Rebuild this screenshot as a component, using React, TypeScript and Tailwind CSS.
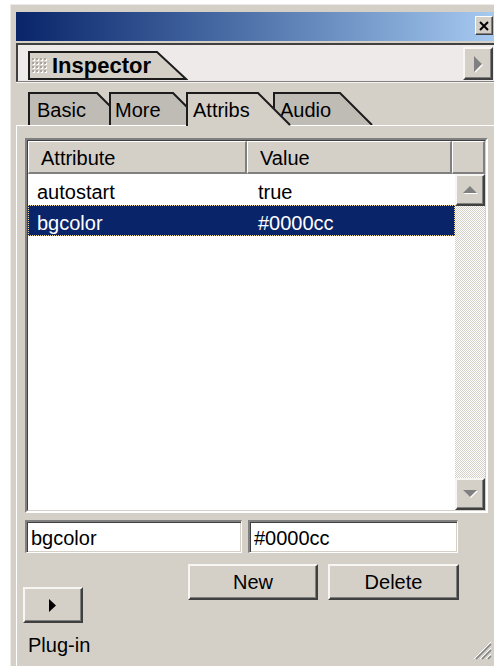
import React from 'react';

type Attr = { name: string; value: string };

const attrs: Attr[] = [
  { name: 'autostart', value: 'true' },
  { name: 'bgcolor', value: '#0000cc' },
];

const raised =
  'border-t-2 border-l-2 border-b-2 border-r-2 border-t-[#f7f6f3] border-l-[#f7f6f3] border-b-[#404040] border-r-[#404040] bg-[#d4d0c8] shadow-[inset_-1px_-1px_0_#808080]';

const sunken =
  'border-t-2 border-l-2 border-b border-r border-t-[#808080] border-l-[#808080] border-b-white border-r-white bg-white shadow-[inset_1px_1px_0_#404040,inset_-1px_-1px_0_#d4d0c8]';

const headerCell =
  'h-full border-t border-l border-b-2 border-r-2 border-t-white border-l-white border-b-[#808080] border-r-[#808080] bg-[#d4d0c8] pl-[12px] pt-[5px] leading-[23px]';

function Grip() {
  const dots = [];
  for (let r = 0; r < 4; r++) {
    for (let c = 0; c < 4; c++) {
      dots.push(
        <g key={`${r}-${c}`}>
          <rect x={c * 4 + 1} y={r * 4 + 1} width="2" height="2" fill="#ffffff" />
          <rect x={c * 4} y={r * 4} width="2" height="2" fill="#a9a59d" />
        </g>
      );
    }
  }
  return (
    <svg width="16" height="16" viewBox="0 0 16 16" className="mt-[5px] shrink-0">
      {dots}
    </svg>
  );
}

function InspectorTab() {
  return (
    <div className="relative h-[29px] w-[160px]">
      <svg className="absolute inset-0" width="160" height="29" viewBox="0 0 160 29">
        <polygon points="1,28 1,1 129,1 158,28" fill="#d4d0c8" stroke="#1c1c1c" strokeWidth="2" />
      </svg>
      <div className="relative flex items-start pl-[4px] pt-[2px]">
        <Grip />
        <span className="ml-[4px] text-[22px] font-bold leading-[25px]">Inspector</span>
      </div>
    </div>
  );
}

function TabShape({ topW, active }: { topW: number; active?: boolean }) {
  const h = active ? 34 : 33;
  const w = topW + 33;
  return (
    <svg className="absolute inset-0" width={w} height={h} viewBox={`0 0 ${w} ${h}`}>
      <polygon
        points={`0,${h} 0,0 ${topW},0 ${w},33 ${w},${h}`}
        fill={active ? '#d4d0c8' : '#bfbcb5'}
      />
      <polyline
        points={`1,${h} 1,1 ${topW},1 ${w - 1},33`}
        fill="none"
        stroke="#1c1c1c"
        strokeWidth="2"
      />
    </svg>
  );
}

function ScrollArrow({ up }: { up?: boolean }) {
  return (
    <div className={`flex h-[32px] w-full items-center justify-center ${raised}`}>
      <svg width="17" height="10" viewBox="0 0 17 10">
        {up ? (
          <>
            <polygon points="2,9 9,2 16,9" fill="#ffffff" />
            <polygon points="1,8 8,1 15,8" fill="#808080" />
          </>
        ) : (
          <>
            <polygon points="2,2 16,2 9,9" fill="#ffffff" />
            <polygon points="1,1 15,1 8,8" fill="#808080" />
          </>
        )}
      </svg>
    </div>
  );
}

export default function App() {
  return (
    <div className="h-[667px] w-[494px] overflow-hidden bg-white font-['Liberation_Sans',Arial,sans-serif] text-[20px] text-black">
      <div className="relative ml-[10px] mt-[4px] flex h-[662px] w-[484px] flex-col border-l border-t border-[#ecebe8] bg-[#d4d0c8] pl-[5px] pt-[7px]">
        {/* title bar */}
        <div className="flex h-[29px] shrink-0 items-start justify-end bg-linear-to-r from-[#0a246a] to-[#a6caf0] pr-[1px] pt-[4px]">
          <div className="flex h-[19px] w-[18px] items-center justify-center border-b border-l border-r border-t border-b-[#404040] border-l-white border-r-[#404040] border-t-white bg-[#d4d0c8] shadow-[inset_-1px_-1px_0_#808080]">
            <svg width="10" height="10" viewBox="0 0 10 10">
              <path d="M1 1L9 9M9 1L1 9" stroke="#000" strokeWidth="2" />
            </svg>
          </div>
        </div>

        {/* panel header */}
        <div className="mt-[2px] flex h-[39px] shrink-0 items-end justify-between border-b border-l-2 border-t-2 border-b-[#808080] border-l-[#404040] border-t-[#404040] bg-[#eeeae9] pb-px pl-[10px]">
          <InspectorTab />
          <div className={`mr-[1px] flex h-[33px] w-[30px] items-center justify-center ${raised}`}>
            <svg width="10" height="18" viewBox="0 0 10 18">
              <polygon points="2,2 10,10 2,18" fill="#ffffff" />
              <polygon points="1,1 9,9 1,17" fill="#808080" />
            </svg>
          </div>
        </div>

        {/* tab strip */}
        <div className="flex shrink-0 items-end border-t border-[#f4f3f0] pl-[12px] pt-[9px]">
          <div className="relative z-[1] h-[33px] w-[102px]">
            <TabShape topW={69} />
            <span className="relative block pl-[9px] pt-[7px] leading-[23px]">Basic</span>
          </div>
          <div className="relative z-[2] -ml-[21px] h-[33px] w-[97px]">
            <TabShape topW={64} />
            <span className="relative block pl-[6px] pt-[7px] leading-[23px]">More</span>
          </div>
          <div className="relative z-[4] -mb-px -ml-[20px] h-[34px] w-[105px]">
            <TabShape topW={72} active />
            <span className="relative block pl-[7px] pt-[7px] leading-[23px]">Attribs</span>
          </div>
          <div className="relative z-[3] -ml-[18px] h-[33px] w-[100px]">
            <TabShape topW={67} />
            <span className="relative block pl-[7px] pt-[7px] leading-[23px]">Audio</span>
          </div>
        </div>

        {/* tab content */}
        <div className="flex flex-1 flex-col border-l border-t border-white pl-[8px] pt-[12px]">
          {/* attribute list */}
          <div className="h-[375px] w-[463px] border-2 border-b-white border-l-[#808080] border-r-white border-t-[#808080]">
            <div className="flex h-full flex-col border border-b-[#d4d0c8] border-l-[#404040] border-r-[#d4d0c8] border-t-[#404040]">
              <div className="flex h-[33px] shrink-0">
                <div className={`w-[219px] ${headerCell}`}>Attribute</div>
                <div className={`w-[205px] ${headerCell}`}>Value</div>
                <div className={`flex-1 ${headerCell}`} />
              </div>
              <div className="flex flex-1">
                <div className="flex-1 bg-white">
                  {attrs.map((a) =>
                    a.name === 'bgcolor' ? (
                      <div
                        key={a.name}
                        className="flex h-[31px] border border-dotted border-[#f5db95] bg-[#0a246a] pt-[6px] leading-[23px] text-white"
                      >
                        <span className="w-[218px] pl-[8px]">{a.name}</span>
                        <span className="pl-[11px]">{a.value}</span>
                      </div>
                    ) : (
                      <div key={a.name} className="flex h-[31px] pt-[7px] leading-[23px]">
                        <span className="w-[219px] pl-[9px]">{a.name}</span>
                        <span className="pl-[11px]">{a.value}</span>
                      </div>
                    )
                  )}
                </div>
                <div className="flex w-[30px] flex-col">
                  <ScrollArrow up />
                  <div className="flex-1 bg-[image:repeating-conic-gradient(#d4d0c8_0%_25%,#ffffff_0%_50%)] bg-[length:2px_2px]" />
                  <ScrollArrow />
                </div>
              </div>
            </div>
          </div>

          {/* name / value fields */}
          <div className="mt-[7px] flex gap-[6px]">
            <input
              readOnly
              defaultValue="bgcolor"
              className={`h-[33px] w-[217px] pl-[4px] pt-[3px] outline-none ${sunken}`}
            />
            <input
              readOnly
              defaultValue="#0000cc"
              className={`h-[33px] w-[210px] pl-[4px] pt-[3px] outline-none ${sunken}`}
            />
          </div>

          {/* buttons */}
          <div className="flex">
            <div className="-ml-[2px] mt-[34px] flex w-[60px] shrink-0 flex-col">
              <button className={`flex h-[36px] w-[60px] items-center justify-center ${raised}`}>
                <svg width="8" height="13" viewBox="0 0 8 13">
                  <polygon points="0,0 7,6.5 0,13" fill="#000" />
                </svg>
              </button>
              <span className="mt-[11px] whitespace-nowrap pl-[5px] leading-[23px]">Plug-in</span>
            </div>
            <div className="ml-[105px] mt-[11px] flex gap-[10px]">
              <button className={`flex h-[36px] w-[130px] items-center justify-center ${raised}`}>New</button>
              <button className={`flex h-[36px] w-[131px] items-center justify-center ${raised}`}>Delete</button>
            </div>
          </div>
        </div>

        {/* resize grip */}
        <svg
          className="absolute bottom-[6px] right-[2px]"
          width="18"
          height="18"
          viewBox="0 0 18 18"
        >
          <path d="M17 2L2 17M17 8L8 17M17 14L14 17" stroke="#808080" strokeWidth="1.5" />
          <path d="M17 0L0 17M17 6L6 17M17 12L12 17" stroke="#ffffff" strokeWidth="1" />
        </svg>
      </div>
    </div>
  );
}
